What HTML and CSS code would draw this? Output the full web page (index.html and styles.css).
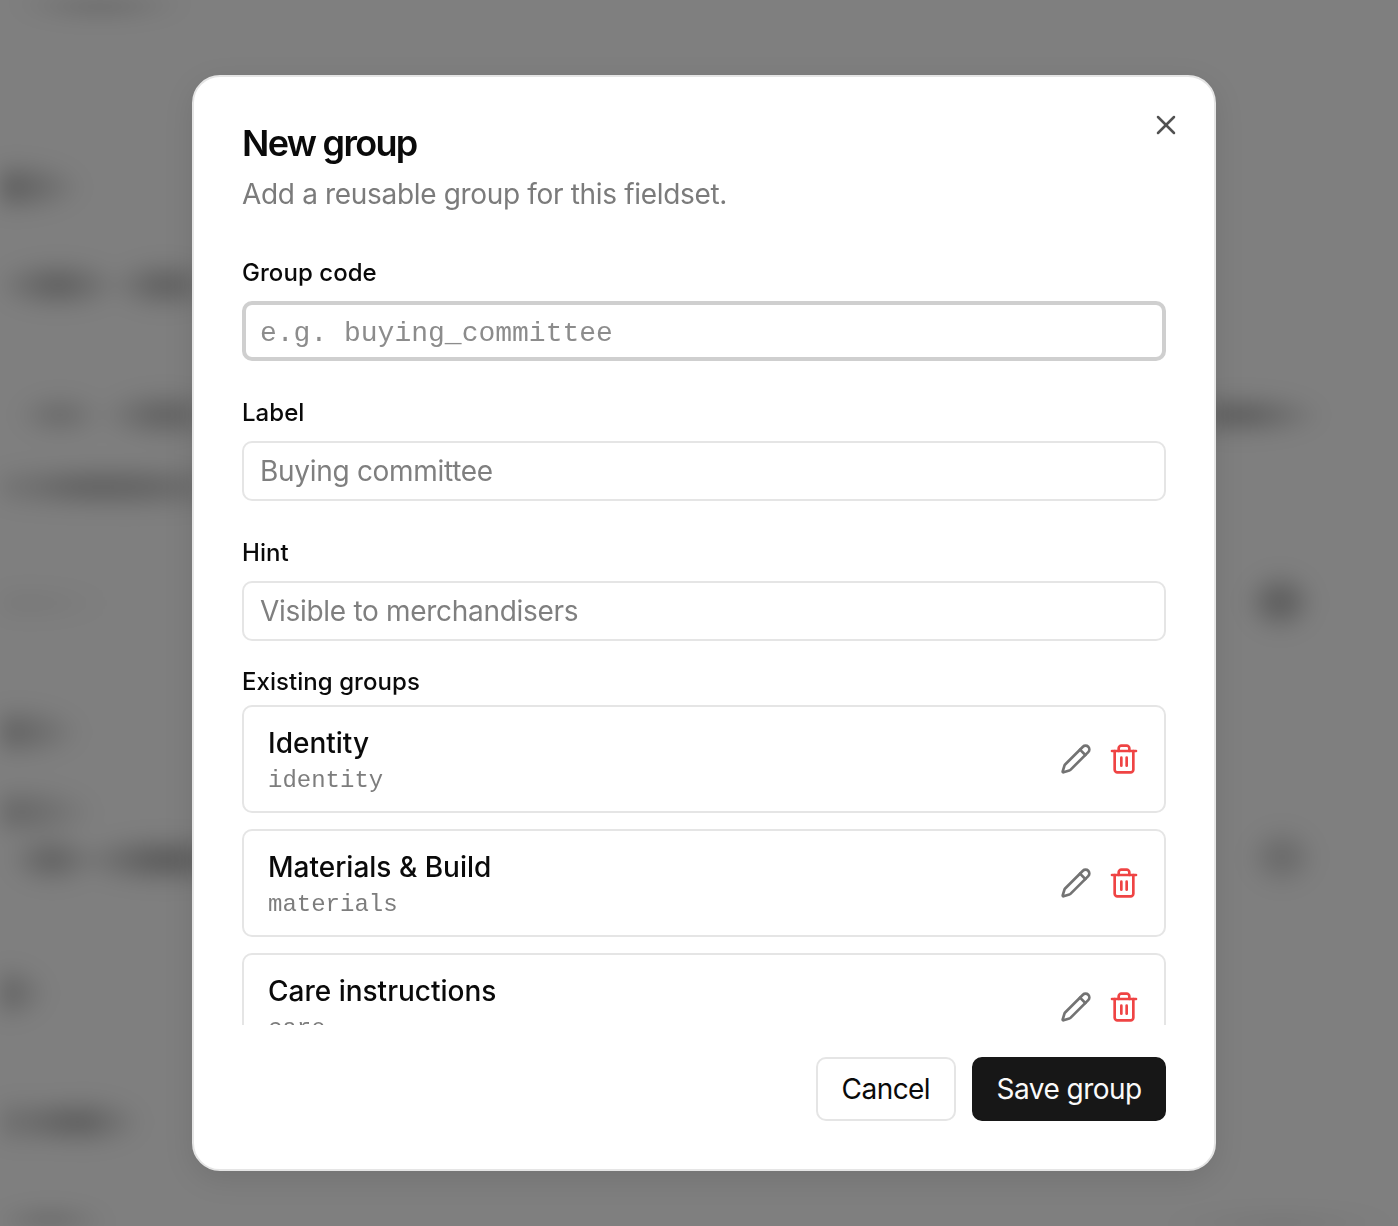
FILE: index.html
```html
<!DOCTYPE html>
<html lang="en">
<head>
    <meta charset="UTF-8">
    <meta name="viewport" content="width=device-width, initial-scale=1.0">
    <title>New group</title>
    <link rel="stylesheet" href="styles.css">
</head>
<body>
    <div class="modal">
        <button class="close-btn" aria-label="Close">
            <svg class="icon-close" viewBox="0 0 24 24"><path d="M18 6 6 18"/><path d="m6 6 12 12"/></svg>
        </button>

        <h2 class="modal-title">New group</h2>
        <p class="modal-desc">Add a reusable group for this fieldset.</p>

        <div class="field">
            <label class="field-label">Group code</label>
            <input class="field-input mono focused" placeholder="e.g. buying_committee">
        </div>
        <div class="field">
            <label class="field-label">Label</label>
            <input class="field-input" placeholder="Buying committee">
        </div>
        <div class="field">
            <label class="field-label">Hint</label>
            <input class="field-input" placeholder="Visible to merchandisers">
        </div>

        <div class="groups-label">Existing groups</div>
        <div class="groups">
            <div class="group-row">
                <div class="group-text">
                    <div class="group-name">Identity</div>
                    <div class="group-code">identity</div>
                </div>
                <div class="group-actions">
                    <svg class="icon icon-edit" viewBox="0 0 24 24"><path d="M21.174 6.812a1 1 0 0 0-3.986-3.987L3.842 16.174a2 2 0 0 0-.5.83l-1.321 4.352a.5.5 0 0 0 .623.622l4.353-1.32a2 2 0 0 0 .83-.497z"/><path d="m15 5 4 4"/></svg>
                    <svg class="icon icon-delete" viewBox="0 0 24 24"><path d="M3 6h18"/><path d="M19 6v14c0 1-1 2-2 2H7c-1 0-2-1-2-2V6"/><path d="M8 6V4c0-1 1-2 2-2h4c1 0 2 1 2 2v2"/><path d="M10 11v6"/><path d="M14 11v6"/></svg>
                </div>
            </div>
            <div class="group-row">
                <div class="group-text">
                    <div class="group-name">Materials &amp; Build</div>
                    <div class="group-code">materials</div>
                </div>
                <div class="group-actions">
                    <svg class="icon icon-edit" viewBox="0 0 24 24"><path d="M21.174 6.812a1 1 0 0 0-3.986-3.987L3.842 16.174a2 2 0 0 0-.5.83l-1.321 4.352a.5.5 0 0 0 .623.622l4.353-1.32a2 2 0 0 0 .83-.497z"/><path d="m15 5 4 4"/></svg>
                    <svg class="icon icon-delete" viewBox="0 0 24 24"><path d="M3 6h18"/><path d="M19 6v14c0 1-1 2-2 2H7c-1 0-2-1-2-2V6"/><path d="M8 6V4c0-1 1-2 2-2h4c1 0 2 1 2 2v2"/><path d="M10 11v6"/><path d="M14 11v6"/></svg>
                </div>
            </div>
            <div class="group-row">
                <div class="group-text">
                    <div class="group-name">Care instructions</div>
                    <div class="group-code">care</div>
                </div>
                <div class="group-actions">
                    <svg class="icon icon-edit" viewBox="0 0 24 24"><path d="M21.174 6.812a1 1 0 0 0-3.986-3.987L3.842 16.174a2 2 0 0 0-.5.83l-1.321 4.352a.5.5 0 0 0 .623.622l4.353-1.32a2 2 0 0 0 .83-.497z"/><path d="m15 5 4 4"/></svg>
                    <svg class="icon icon-delete" viewBox="0 0 24 24"><path d="M3 6h18"/><path d="M19 6v14c0 1-1 2-2 2H7c-1 0-2-1-2-2V6"/><path d="M8 6V4c0-1 1-2 2-2h4c1 0 2 1 2 2v2"/><path d="M10 11v6"/><path d="M14 11v6"/></svg>
                </div>
            </div>
        </div>

        <div class="modal-footer">
            <button class="btn btn-cancel">Cancel</button>
            <button class="btn btn-save">Save group</button>
        </div>
    </div>
</body>
</html>
```

FILE: styles.css
```css
* {
    box-sizing: border-box;
}
html, body {
    height: 100%;
}
body {
    margin: 0;
    overflow: hidden;
    font-family: Inter, "Liberation Sans", sans-serif;
    color: #0a0a0a;
    background-color: #7f7f7f;
}
/* the page behind the modal, blurred away */
body::before {
    content: "";
    position: fixed;
    inset: 0;
    z-index: -1;
    filter: blur(10px);
    background-image:
        radial-gradient(ellipse 90px 20px at 100px 0px, rgba(0,0,0,.24), transparent),
        radial-gradient(ellipse 75px 28px at 10px 187px, rgba(0,0,0,.28), transparent),
        radial-gradient(ellipse 65px 26px at 58px 285px, rgba(0,0,0,.28), transparent),
        radial-gradient(ellipse 55px 26px at 165px 285px, rgba(0,0,0,.28), transparent),
        radial-gradient(ellipse 45px 22px at 60px 415px, rgba(0,0,0,.18), transparent),
        radial-gradient(ellipse 65px 26px at 165px 415px, rgba(0,0,0,.26), transparent),
        radial-gradient(ellipse 130px 24px at 80px 487px, rgba(0,0,0,.2), transparent),
        radial-gradient(ellipse 130px 26px at 160px 487px, rgba(0,0,0,.14), transparent),
        radial-gradient(ellipse 80px 18px at 30px 603px, rgba(0,0,0,.06), transparent),
        radial-gradient(ellipse 72px 28px at 12px 732px, rgba(0,0,0,.24), transparent),
        radial-gradient(ellipse 80px 28px at 18px 812px, rgba(0,0,0,.2), transparent),
        radial-gradient(ellipse 45px 26px at 52px 860px, rgba(0,0,0,.26), transparent),
        radial-gradient(ellipse 90px 26px at 165px 860px, rgba(0,0,0,.32), transparent),
        radial-gradient(ellipse 45px 30px at 4px 993px, rgba(0,0,0,.24), transparent),
        radial-gradient(ellipse 85px 26px at 25px 1122px, rgba(0,0,0,.16), transparent),
        radial-gradient(ellipse 60px 26px at 85px 1122px, rgba(0,0,0,.24), transparent),
        radial-gradient(ellipse 60px 18px at 50px 1224px, rgba(0,0,0,.24), transparent),
        radial-gradient(ellipse 85px 22px at 1240px 415px, rgba(0,0,0,.3), transparent),
        radial-gradient(ellipse 36px 32px at 1280px 602px, rgba(0,0,0,.32), transparent),
        radial-gradient(ellipse 36px 32px at 1282px 857px, rgba(0,0,0,.2), transparent),
        radial-gradient(ellipse 120px 12px at 1280px 1226px, rgba(0,0,0,.16), transparent);
}
.modal {
    position: relative;
    width: 1024px;
    height: 1096px;
    margin: 75px 0 0 192px;
    padding: 48px;
    background: #fff;
    border: 2px solid #e5e5e5;
    border-radius: 28px;
    box-shadow: 0 8px 30px rgba(0,0,0,.1);
}
.close-btn {
    position: absolute;
    top: 32px;
    right: 32px;
    width: 32px;
    height: 32px;
    padding: 0;
    border: none;
    background: none;
}
.icon-close {
    display: block;
    width: 32px;
    height: 32px;
    fill: none;
    stroke: #525252;
    stroke-width: 1.9;
    stroke-linecap: round;
    stroke-linejoin: round;
}
.modal-title {
    margin: -1px 0 0;
    font-size: 36px;
    line-height: 38px;
    font-weight: 600;
    letter-spacing: -1.7px;
}
.modal-desc {
    margin: 12px 0 0;
    font-size: 28px;
    line-height: 40px;
    color: #7b7b7b;
    letter-spacing: -0.33px;
}
.field {
    margin-bottom: 36px;
}
.modal-desc + .field {
    margin-top: 43px;
}
.field-label {
    display: block;
    margin-bottom: 12px;
    font-size: 24px;
    line-height: 32px;
    font-weight: 500;
    letter-spacing: 0.05px;
}
.field-input {
    display: block;
    width: 100%;
    height: 60px;
    padding: 0 16px;
    font-family: Inter, "Liberation Sans", sans-serif;
    font-size: 28px;
    letter-spacing: -0.3px;
    color: #0a0a0a;
    background: #fff;
    border: 2px solid #e5e5e5;
    border-radius: 10px;
    outline: none;
}
.field-input::placeholder {
    color: #7f7f7f;
    opacity: 1;
}
.field-input.mono {
    font-family: "Liberation Mono", monospace;
    letter-spacing: 0;
}
.field-input.mono::placeholder {
    color: #8c8c8c;
}
.field-input.focused {
    border: 4px solid #cfcfcf;
    padding: 4px 14px 0;
}
.field:nth-of-type(3) {
    margin-bottom: 25px;
}
.groups-label {
    font-size: 24px;
    line-height: 32px;
    font-weight: 500;
    letter-spacing: 0.05px;
    margin-bottom: 7px;
}
.groups {
    display: flex;
    flex-direction: column;
    gap: 16px;
    height: 320px;
    overflow: hidden;
}
.group-row {
    display: flex;
    flex: none;
    align-items: center;
    justify-content: space-between;
    height: 108px;
    padding: 16px 24px;
    border: 2px solid #e5e5e5;
    border-radius: 10px;
}
.group-name {
    font-size: 28px;
    line-height: 40px;
    font-weight: 450;
}
.group-code {
    font-family: "Liberation Mono", monospace;
    font-size: 24px;
    line-height: 36px;
    margin-bottom: -4px;
    color: #7d7d7d;
}
.group-actions {
    display: flex;
    gap: 16px;
}
.icon {
    display: block;
    width: 32px;
    height: 32px;
    fill: none;
    stroke-width: 2;
    stroke-linecap: round;
    stroke-linejoin: round;
}
.icon-edit {
    stroke: #737373;
}
.icon-delete {
    stroke: #ef4444;
}
.modal-footer {
    display: flex;
    justify-content: flex-end;
    gap: 16px;
    margin-top: 32px;
}
.btn {
    height: 64px;
    padding: 0 24px;
    font-family: Inter, "Liberation Sans", sans-serif;
    font-size: 28px;
    font-weight: 400;
    letter-spacing: -0.55px;
    border-radius: 10px;
}
.btn-cancel {
    color: #0a0a0a;
    background: #fff;
    border: 2px solid #e5e5e5;
}
.btn-save {
    padding: 0 22.5px;
    color: #fafafa;
    background: #171717;
    border: 2px solid #171717;
}
```
